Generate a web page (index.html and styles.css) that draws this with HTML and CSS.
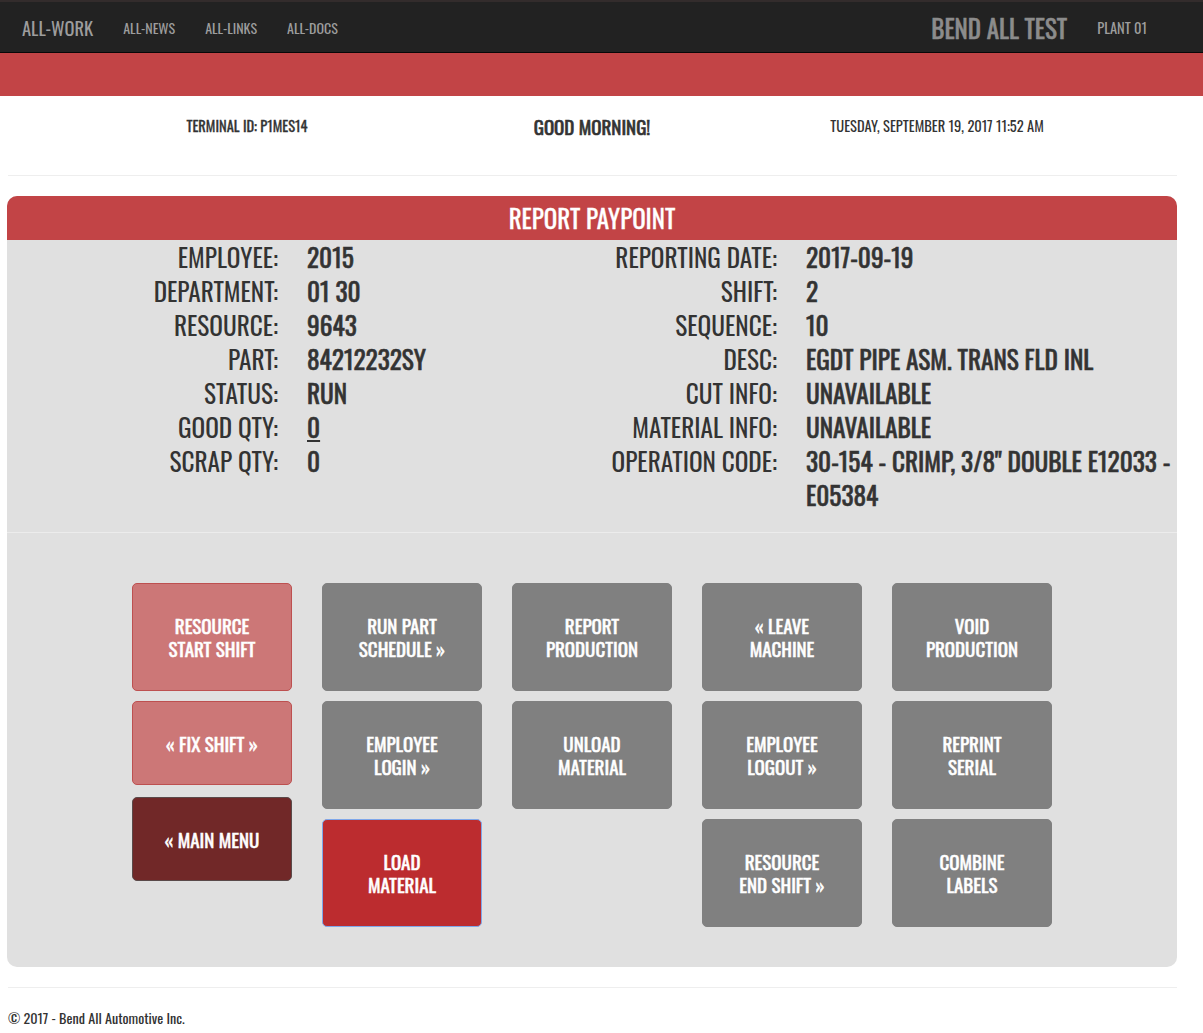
FILE: index.html
```html
<!DOCTYPE html>
<html lang="en">
<head>
    <meta charset="UTF-8">
    <meta name="viewport" content="width=device-width, initial-scale=1.0">
    <title>Report Paypoint</title>
    <link rel="stylesheet" href="styles.css">
</head>
<body>
    <nav class="topbar">
        <div class="topbar-left">
            <a class="brand" href="#">ALL-WORK</a>
            <a class="nav-link" href="#">ALL-NEWS</a>
            <a class="nav-link" href="#">ALL-LINKS</a>
            <a class="nav-link" href="#">ALL-DOCS</a>
        </div>
        <div class="topbar-right">
            <span class="site-name">BEND ALL TEST</span>
            <span class="plant">PLANT 01</span>
        </div>
    </nav>
    <div class="banner"></div>

    <div class="container">
        <div class="info-row">
            <div class="terminal">TERMINAL ID: P1MES14</div>
            <div class="greeting">GOOD MORNING!</div>
            <div class="clock">TUESDAY, SEPTEMBER 19, 2017 11:52 AM</div>
        </div>
        <hr class="rule">

        <div class="panel">
            <div class="panel-heading">REPORT PAYPOINT</div>
            <div class="details">
                <div class="detail-col left">
                    <div class="label">EMPLOYEE:</div><div class="value">2015</div>
                    <div class="label">DEPARTMENT:</div><div class="value">01 30</div>
                    <div class="label">RESOURCE:</div><div class="value">9643</div>
                    <div class="label">PART:</div><div class="value">84212232SY</div>
                    <div class="label">STATUS:</div><div class="value">RUN</div>
                    <div class="label">GOOD QTY:</div><div class="value"><a href="#">0</a></div>
                    <div class="label">SCRAP QTY:</div><div class="value">0</div>
                </div>
                <div class="detail-col right">
                    <div class="label">REPORTING DATE:</div><div class="value">2017-09-19</div>
                    <div class="label">SHIFT:</div><div class="value">2</div>
                    <div class="label">SEQUENCE:</div><div class="value">10</div>
                    <div class="label">DESC:</div><div class="value">EGDT PIPE ASM. TRANS FLD INL</div>
                    <div class="label">CUT INFO:</div><div class="value">UNAVAILABLE</div>
                    <div class="label">MATERIAL INFO:</div><div class="value">UNAVAILABLE</div>
                    <div class="label">OPERATION CODE:</div><div class="value">30-154 - CRIMP, 3/8" DOUBLE E12033 - E05384</div>
                </div>
            </div>

            <div class="actions">
                <div class="action-col">
                    <a class="btn btn-light-red" href="#">RESOURCE<br>START SHIFT</a>
                    <a class="btn btn-light-red short" href="#">&laquo; FIX SHIFT &raquo;</a>
                    <a class="btn btn-dark-red short spaced" href="#">&laquo; MAIN MENU</a>
                </div>
                <div class="action-col">
                    <a class="btn" href="#">RUN PART<br>SCHEDULE &raquo;</a>
                    <a class="btn" href="#">EMPLOYEE<br>LOGIN &raquo;</a>
                    <a class="btn btn-red" href="#">LOAD<br>MATERIAL</a>
                </div>
                <div class="action-col">
                    <a class="btn" href="#">REPORT<br>PRODUCTION</a>
                    <a class="btn" href="#">UNLOAD<br>MATERIAL</a>
                </div>
                <div class="action-col">
                    <a class="btn" href="#">&laquo; LEAVE<br>MACHINE</a>
                    <a class="btn" href="#">EMPLOYEE<br>LOGOUT &raquo;</a>
                    <a class="btn" href="#">RESOURCE<br>END SHIFT &raquo;</a>
                </div>
                <div class="action-col">
                    <a class="btn" href="#">VOID<br>PRODUCTION</a>
                    <a class="btn" href="#">REPRINT<br>SERIAL</a>
                    <a class="btn" href="#">COMBINE<br>LABELS</a>
                </div>
            </div>
        </div>

        <hr class="rule footer-rule">
        <footer class="footer">&copy; 2017 - Bend All Automotive Inc.</footer>
    </div>
</body>
</html>
```

FILE: styles.css
```css
body {
    margin: 0;
    padding: 0;
    font-family: 'Oswald', 'Liberation Sans Narrow', 'DejaVu Sans Condensed', sans-serif;
    color: #333;
    background: #fff;
}

a {
    text-decoration: none;
}

/* heavy look without the wider bold advances */
.greeting,
.site-name,
.value {
    -webkit-text-stroke: 0.6px currentColor;
}

/* top navigation */
.topbar {
    display: flex;
    justify-content: space-between;
    align-items: center;
    height: 50px;
    background-color: #222;
    border-top: 2px solid #332c2c;
    border-bottom: 1px solid #080808;
}

.topbar-left {
    display: flex;
    align-items: center;
    padding-left: 22px;
}

.brand {
    font-size: 18.5px;
    color: #9d9d9d;
    margin-right: 30px;
}

.nav-link {
    font-size: 14px;
    color: #9d9d9d;
    margin-right: 30px;
}

.topbar-right {
    display: flex;
    align-items: center;
    padding-right: 56px;
}

.site-name {
    font-size: 25px;
    color: #8c8c8c;
    margin-right: 30px;
}

.plant {
    font-size: 14.5px;
    color: #9d9d9d;
}

.banner {
    height: 43px;
    background-color: #c24446;
}

.container {
    width: 1170px;
    margin-left: 7px;
}

/* terminal / greeting / clock */
.info-row {
    display: grid;
    grid-template-columns: repeat(3, 345px);
    justify-content: center;
    align-items: center;
    align-content: start;
    text-align: center;
    padding-top: 18px;
    height: 61px;
}

.terminal,
.clock {
    font-size: 14.5px;
    line-height: 24px;
}

.terminal {
    -webkit-text-stroke: 0.3px currentColor;
}

.greeting {
    font-size: 19px;
    line-height: 22px;
}

.rule {
    margin: 0 0 0 1px;
    border: 0;
    border-top: 1px solid #eee;
}

/* paypoint panel */
.panel {
    margin-top: 20px;
    background-color: #e0e0e0;
    border-radius: 10px;
    overflow: hidden;
}

.panel-heading {
    height: 44px;
    line-height: 44px;
    background-color: #c24446;
    color: #fff;
    font-size: 25px;
    text-align: center;
    -webkit-text-stroke: 0.3px currentColor;
}

.details {
    display: grid;
    grid-template-columns: 500px 670px;
    padding-bottom: 20px;
    border-bottom: 1px solid #ececec;
}

.detail-col {
    display: grid;
    column-gap: 29px;
    align-content: start;
    font-size: 25.3px;
    line-height: 34px;
}

.detail-col.left {
    grid-template-columns: 271px 200px;
}

.detail-col.right {
    grid-template-columns: 270px 366px;
}

.label {
    text-align: right;
}

.value a {
    color: #333;
    text-decoration: underline;
}

/* action buttons */
.actions {
    display: flex;
    justify-content: center;
    gap: 30px;
    padding: 50px 0 40px;
}

.action-col {
    display: flex;
    flex-direction: column;
    gap: 10px;
    width: 160px;
}

.btn {
    display: flex;
    align-items: center;
    justify-content: center;
    height: 108px;
    box-sizing: border-box;
    border: 1px solid #808080;
    border-radius: 5px;
    background-color: #808080;
    color: #fff;
    font-size: 19px;
    line-height: 23px;
    text-align: center;
    -webkit-text-stroke: 0.5px currentColor;
}

.btn.short {
    height: 84px;
}

.btn.spaced {
    margin-top: 2px;
}

.btn-light-red {
    background-color: #cc7777;
    border-color: #bd5050;
}

.btn-dark-red {
    background-color: #712828;
    border-color: #5a4a4a;
}

.btn-red {
    background-color: #bc2c2f;
    border-color: #7fa7ea;
}

/* footer */
.footer-rule {
    margin-top: 20px;
}

.footer {
    padding: 20px 0 0 1px;
    font-size: 14.2px;
    line-height: 20px;
}
```
